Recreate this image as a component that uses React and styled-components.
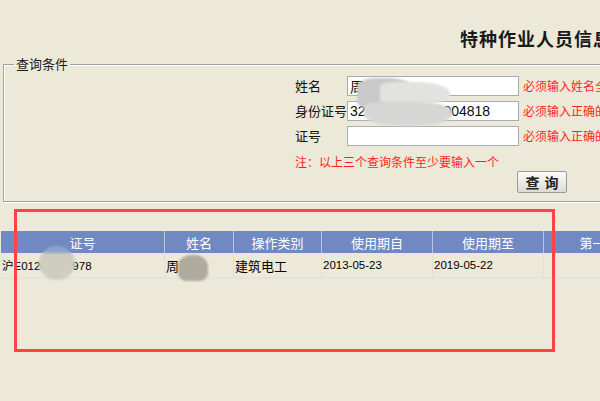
import React from 'react';
import styled, { createGlobalStyle } from 'styled-components';

const GlobalStyle = createGlobalStyle`
  html, body {
    margin: 0;
    padding: 0;
    background: #ece9d8;
    overflow: hidden;
  }
  body {
    font-family: "Liberation Sans", "Noto Sans CJK SC", sans-serif;
    color: #000;
  }
`;

const Page = styled.div`
  position: relative;
  width: 800px;
  height: 401px;
`;

const Header = styled.div`
  padding: 28px 0 0 460px;
  height: 28px;
`;

const Title = styled.h1`
  margin: 0;
  font-family: "Noto Sans CJK SC", sans-serif;
  font-size: 18px;
  line-height: 20px;
  font-weight: 700;
  letter-spacing: 1px;
  color: #1a1a1a;
`;

const Fieldset = styled.fieldset`
  margin: 0 0 0 3px;
  width: 780px;
  padding: 4px 0 8px 291px;
  border: 1px solid #a0a0a0;
  box-shadow: inset 1px 1px 0 #fff, 1px 1px 0 #fff;
`;

const Legend = styled.legend`
  margin-left: -281px;
  padding: 0 2px;
  font-family: "Noto Sans CJK SC", sans-serif;
  font-size: 13px;
  line-height: 16px;
  color: #1a1a1a;
`;

const FormGrid = styled.div`
  display: grid;
  grid-template-columns: 52px 172px auto;
  grid-auto-rows: 20px;
  row-gap: 5px;
  align-items: center;
`;

const Label = styled.label`
  font-family: "Noto Sans CJK SC", sans-serif;
  font-size: 13px;
  line-height: 20px;
  color: #111;
  white-space: nowrap;
`;

const Input = styled.input`
  box-sizing: border-box;
  width: 172px;
  height: 20px;
  margin: 0;
  padding: 0 2px;
  border: 1px solid #a8adb4;
  background: #fff;
  font-family: "Liberation Sans", "Noto Sans CJK SC", sans-serif;
  font-size: 14px;
  color: #0a0a0a;
  outline: none;
`;

const Hint = styled.span`
  padding-left: 4px;
  font-family: "Noto Sans CJK SC", sans-serif;
  font-size: 12px;
  line-height: 20px;
  color: #ff1e1e;
  white-space: nowrap;
`;

const Note = styled.div`
  grid-column: 1 / -1;
  font-family: "Noto Sans CJK SC", sans-serif;
  font-size: 12px;
  line-height: 16px;
  color: #ff1e1e;
  margin-top: 2px;
`;

const ButtonRow = styled.div`
  padding: 0 0 0 222px;
`;

const Button = styled.button`
  width: 50px;
  height: 22px;
  padding: 0;
  border: 1px solid #9a9a9a;
  border-radius: 2px;
  background: linear-gradient(#fbfbf9, #dcdcd4);
  font-family: "Noto Sans CJK SC", sans-serif;
  font-size: 14px;
  font-weight: 700;
  letter-spacing: 5px;
  text-indent: 5px;
  color: #222;
`;

const Table = styled.table`
  margin: 29px 0 0 1px;
  border-collapse: collapse;
  table-layout: fixed;
  width: 700px;
`;

const Th = styled.th`
  width: ${p => p.w}px;
  height: 22px;
  padding: 0;
  background: #7089c2;
  border-right: 1px solid #b8c4e2;
  font-family: "Noto Sans CJK SC", sans-serif;
  font-size: 13px;
  font-weight: 400;
  color: #fff;
  text-align: center;
  white-space: nowrap;
  overflow: hidden;
`;

const Td = styled.td`
  height: 24px;
  padding: 0 0 0 1px;
  border-right: 1px solid #e2e0d6;
  border-bottom: 2px solid #e4e3e0;
  font-family: ${p => (p.num ? '"Liberation Sans", "Noto Sans CJK SC", sans-serif' : '"Noto Sans CJK SC", sans-serif')};
  font-size: ${p => (p.num ? '11.5px' : '13px')};
  color: #000;
  white-space: nowrap;
  overflow: hidden;
`;

const Blur = styled.div`
  position: absolute;
  left: ${p => p.x}px;
  top: ${p => p.y}px;
  width: ${p => p.w}px;
  height: ${p => p.h}px;
  border-radius: ${p => p.r || '40%'};
  background: ${p => p.bg};
  filter: blur(1.2px);
`;

const Marker = styled.div`
  position: absolute;
  left: 14px;
  top: 209px;
  width: 535px;
  height: 137px;
  border: 3px solid #ff4343;
`;

const columns = [
  { w: 163, t: '证号' },
  { w: 68, t: '姓名' },
  { w: 87, t: '操作类别' },
  { w: 110, t: '使用期自' },
  { w: 110, t: '使用期至' },
  { w: 162, t: '第一次复审日期' },
];

export default function App() {
  return (
    <>
      <GlobalStyle />
      <Page>
        <Header>
          <Title>特种作业人员信息查询</Title>
        </Header>
        <Fieldset>
          <Legend>查询条件</Legend>
          <FormGrid>
            <Label>姓名</Label>
            <Input defaultValue="周" />
            <Hint>必须输入姓名全称</Hint>
            <Label>身份证号</Label>
            <Input defaultValue="320000000000004818" />
            <Hint>必须输入正确的身份证号</Hint>
            <Label>证号</Label>
            <Input />
            <Hint>必须输入正确的证号</Hint>
            <Note>注：以上三个查询条件至少要输入一个</Note>
          </FormGrid>
          <ButtonRow>
            <Button>查询</Button>
          </ButtonRow>
        </Fieldset>
        <Table>
          <thead>
            <tr>
              {columns.map(c => (
                <Th key={c.t} w={c.w}>{c.t}</Th>
              ))}
            </tr>
          </thead>
          <tbody>
            <tr>
              <Td num>沪E01200000978</Td>
              <Td>周某</Td>
              <Td>建筑电工</Td>
              <Td num>2013-05-23</Td>
              <Td num>2019-05-22</Td>
              <Td />
            </tr>
          </tbody>
        </Table>

        <Blur x={357} y={78} w={58} h={30} r="30% 45% 20% 20%" bg="#c9c9c9" />
        <Blur x={380} y={82} w={70} h={22} r="20% 50% 40% 20%" bg="#e2e2e0" />
        <Blur x={364} y={102} w={88} h={24} r="20% 40% 45% 45%" bg="#d6d6d4" />
        <Blur x={39} y={246} w={36} h={34} r="50%" bg="linear-gradient(#8fa2cc 0 22%, #cfcdc0 22% 100%)" />
        <Blur x={178} y={255} w={30} h={26} r="45% 45% 30% 30%" bg="#aeab9d" />
        <Marker />
      </Page>
    </>
  );
}
